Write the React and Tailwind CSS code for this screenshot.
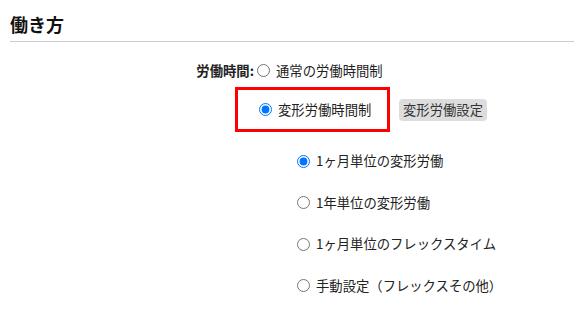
import React from "react";

const SUB_OPTIONS = [
  { label: "1ヶ月単位の変形労働", checked: true },
  { label: "1年単位の変形労働", checked: false },
  { label: "1ヶ月単位のフレックスタイム", checked: false },
  { label: "手動設定（フレックスその他）", checked: false },
];

function Radio({ checked, name }) {
  return (
    <input
      type="radio"
      name={name}
      defaultChecked={checked}
      className="m-0 h-[13px] w-[13px] shrink-0 accent-[#0075ff]"
    />
  );
}

export default function App() {
  return (
    <div className="w-[574px] h-[316px] bg-white text-[#222] font-['Noto_Sans_CJK_JP',sans-serif]">
      {/* Header */}
      <div className="pl-[10px] pt-[11px]">
        <h2 className="text-[18px] leading-[26px] font-bold text-[#111]">働き方</h2>
        <div className="mt-[4px] h-px bg-[#cccccc]" />
      </div>

      {/* 労働時間 */}
      <div className="flex items-center h-[20px] mt-[19px]">
        <span className="w-[257px] text-right pr-[3px] text-[13.33px] font-bold">労働時間:</span>
        <label className="flex items-center gap-[6px] text-[13.33px]">
          <Radio name="worktime" checked={false} />
          <span>通常の労働時間制</span>
        </label>
      </div>

      <div className="flex items-center mt-[6px] pl-[235px]">
        <div className="flex items-center h-[45px] w-[155px] border-[3px] border-[#ff0000] pl-[21px]">
          <label className="flex items-center gap-[6px] text-[13.33px]">
            <Radio name="worktime" checked />
            <span>変形労働時間制</span>
          </label>
        </div>
        <button className="ml-[9px] h-[22px] w-[88px] rounded-[4px] bg-[#dddddd] text-[13.33px] text-[#333]">
          変形労働設定
        </button>
      </div>

      {/* Sub options */}
      <div className="flex flex-col pl-[297px] mt-[19px] gap-[21.5px]">
        {SUB_OPTIONS.map((o) => (
          <label key={o.label} className="flex items-center gap-[6px] h-[20px] text-[13.33px]">
            <Radio name="variant" checked={o.checked} />
            <span>{o.label}</span>
          </label>
        ))}
      </div>
    </div>
  );
}
